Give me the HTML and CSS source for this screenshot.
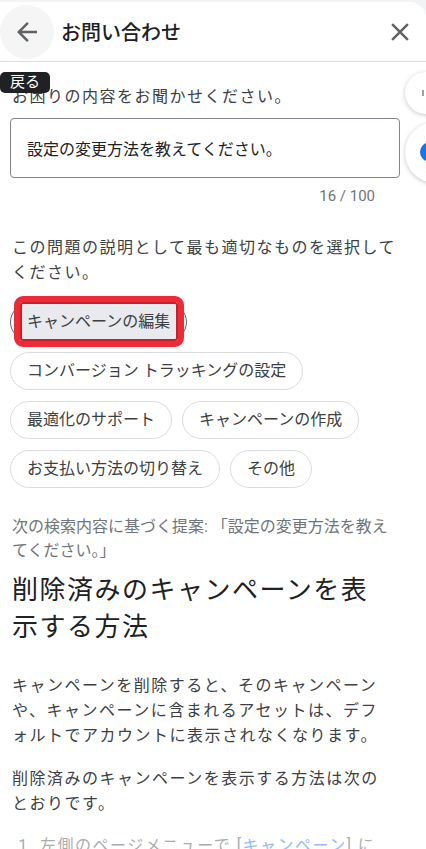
FILE: index.html
```html
<!DOCTYPE html>
<html lang="ja">

<head>
    <meta charset="UTF-8">
    <meta name="viewport" content="width=device-width, initial-scale=1.0">
    <title>お問い合わせ</title>
    <link rel="stylesheet" href="styles.css">
</head>

<body>
    <div class="panel">
        <header class="panel-header">
            <div class="back-btn">
                <svg width="30" height="30" viewBox="0 0 24 24"><path fill="#5f6368" d="M20 11H7.83l5.59-5.59L12 4l-8 8 8 8 1.41-1.41L7.83 13H20v-2z"/></svg>
            </div>
            <div class="title">お問い合わせ</div>
            <svg class="close" width="30" height="30" viewBox="0 0 24 24"><path fill="#5f6368" d="M19 6.41L17.59 5 12 10.59 6.41 5 5 6.41 10.59 12 5 17.59 6.41 19 12 13.41 17.59 19 19 17.59 13.41 12z"/></svg>
        </header>

        <div class="tooltip">戻る</div>

        <section class="ask">
            <p class="ask-label">お困りの内容をお聞かせください。</p>
            <div class="query-box">設定の変更方法を教えてください。</div>
            <div class="counter">16 / 100</div>

            <p class="ask-label topic-label">この問題の説明として最も適切なものを選択してください。</p>
            <div class="chips">
                <span class="chip selected">キャンペーンの編集</span>
                <span class="chip">コンバージョン トラッキングの設定</span>
                <span class="chip">最適化のサポート</span>
                <span class="chip">キャンペーンの作成</span>
                <span class="chip">お支払い方法の切り替え</span>
                <span class="chip">その他</span>
            </div>
        </section>

        <article class="answer">
            <p class="suggest">次の検索内容に基づく提案: 「設定の変更方法を教えてください。」</p>
            <h2>削除済みのキャンペーンを表示する方法</h2>
            <p>キャンペーンを削除すると、そのキャンペーンや、キャンペーンに含まれるアセットは、デフォルトでアカウントに表示されなくなります。</p>
            <p class="after">削除済みのキャンペーンを表示する方法は次のとおりです。</p>
            <ol>
                <li>左側のページメニューで [<a href="#">キャンペーン</a>] に</li>
            </ol>
        </article>
    </div>

    <div class="side-rail">
        <div class="rail-btn small"><span class="rail-mark"></span></div>
        <div class="rail-btn big"><span class="rail-avatar"></span></div>
    </div>
</body>

</html>
```

FILE: styles.css
```css
body {
    margin: 0;
    background-color: #f1f3f4;
    font-family: Roboto, "Noto Sans CJK JP", sans-serif;
    overflow: hidden;
}

.panel {
    position: relative;
    margin-top: 2px;
    min-height: 847px;
    background: white;
    border-radius: 0 16px 0 0;
}

.panel-header {
    height: 60px;
    box-sizing: border-box;
    display: flex;
    align-items: center;
    padding-right: 11px;
    border-bottom: 1px solid #dadce0;
}

.back-btn {
    width: 54px;
    height: 54px;
    border-radius: 50%;
    background-color: #f5f5f5;
    display: flex;
    align-items: center;
    justify-content: center;
}

.title {
    flex: 1;
    margin-left: 7px;
    font-size: 20px;
    font-weight: 500;
    color: #202124;
}

.tooltip {
    position: absolute;
    left: 0;
    top: 70px;
    width: 50px;
    height: 21px;
    line-height: 21px;
    text-align: center;
    font-size: 15px;
    color: white;
    background-color: #202124;
    border-radius: 5px;
}

.ask {
    padding: 22px 16px 0 10px;
}

.ask-label {
    margin: 0;
    padding-left: 2px;
    font-size: 16px;
    letter-spacing: 1.5px;
    line-height: 25px;
    color: #3c4043;
}

.query-box {
    margin-top: 9px;
    width: 390px;
    height: 60px;
    box-sizing: border-box;
    display: flex;
    align-items: center;
    padding: 0 16px;
    border: 1px solid #80868b;
    border-radius: 4px;
    font-size: 16px;
    color: #202124;
}

.counter {
    width: 390px;
    box-sizing: border-box;
    margin-top: 8px;
    padding-right: 25px;
    text-align: right;
    font-size: 15px;
    line-height: 20px;
    color: #70757a;
}

.topic-label {
    margin-top: 29px;
}

.chips {
    margin-top: 18px;
    display: flex;
    flex-wrap: wrap;
    gap: 11px 10px;
}

.chip {
    position: relative;
    z-index: 0;
    height: 38px;
    box-sizing: border-box;
    padding: 0 16px;
    border: 1px solid #dadce0;
    border-radius: 19px;
    font-size: 16px;
    line-height: 36px;
    color: #3c4043;
    background: white;
}

.chip.selected {
    border-color: #5f6368;
}

/* red highlight box drawn over the selected chip */
.chip.selected::before {
    content: "";
    position: absolute;
    z-index: -1;
    top: -8px;
    bottom: -7px;
    left: 3px;
    right: 2px;
    border: 6px solid #ec2b37;
    border-radius: 9px;
    background-color: #e8eaed;
    box-shadow: inset 0 0 0 2px #c41f2a;
}

.answer {
    margin-top: 27px;
    padding: 0 34px 0 12px;
}

.answer p {
    margin: 27px 0 0;
    font-size: 16px;
    letter-spacing: 1.5px;
    line-height: 25px;
    color: #3c4043;
}

.answer .suggest {
    margin: 0;
    letter-spacing: 0;
    line-height: 24px;
    color: #70757a;
}

.answer .after {
    margin-top: 18px;
}

h2 {
    margin: 9px 0 0;
    font-size: 26px;
    font-weight: 400;
    letter-spacing: 1.5px;
    line-height: 37px;
    color: #202124;
}

ol {
    margin: 17px 0 0;
    padding-left: 28px;
}

li {
    font-size: 16px;
    letter-spacing: 1.5px;
    line-height: 25px;
    color: #a8abb0;
}

li a {
    color: #94bbf9;
    text-decoration: none;
}

.side-rail {
    position: fixed;
    left: 405px;
    top: 72px;
    display: flex;
    flex-direction: column;
    gap: 8px;
}

.rail-btn {
    position: relative;
    border-radius: 50%;
    background: white;
    box-shadow: 0 1px 4px rgba(60, 64, 67, 0.3);
}

.rail-btn.small {
    width: 42px;
    height: 42px;
}

.rail-btn.big {
    width: 61px;
    height: 61px;
}

.rail-mark {
    position: absolute;
    left: 17px;
    top: 18px;
    width: 2px;
    height: 6px;
    background-color: #9aa0a6;
}

.rail-avatar {
    position: absolute;
    left: 15px;
    top: 20px;
    width: 20px;
    height: 20px;
    border-radius: 50%;
    background-color: #1a73e8;
}
```
